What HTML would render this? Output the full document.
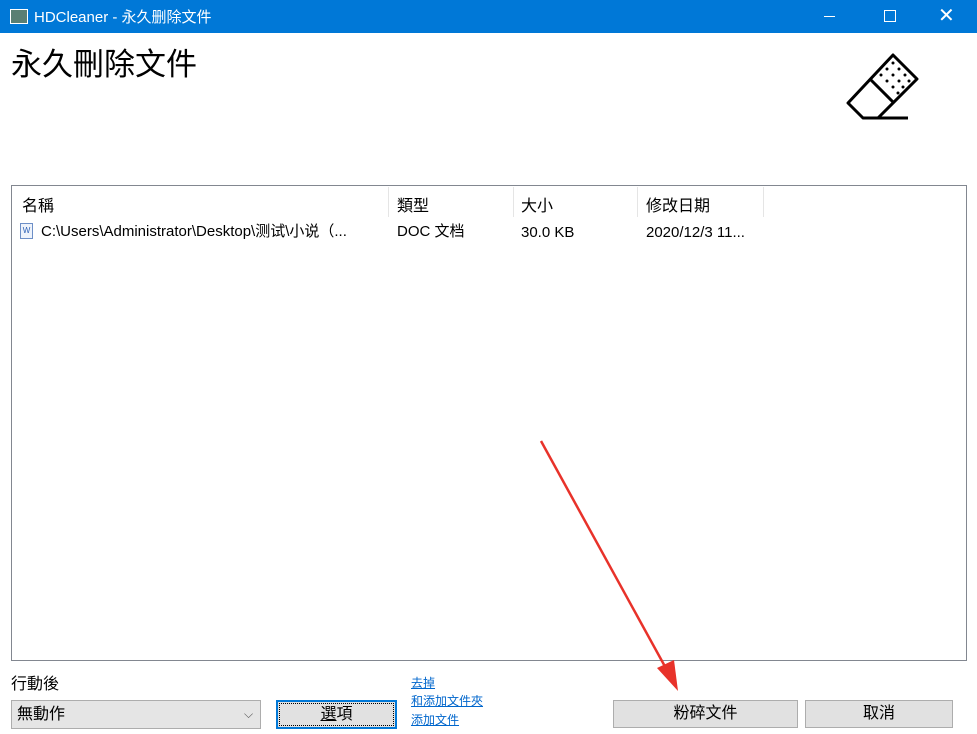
<!DOCTYPE html>
<html><head><meta charset="utf-8"><style>
body{margin:0;width:977px;height:734px;background:#fff;position:relative;overflow:hidden;font-family:"Liberation Sans","Microsoft YaHei","Noto Sans CJK SC",sans-serif;color:#000}
.a{position:absolute}
.tb{left:0;top:0;width:977px;height:33px;background:#0078d7;color:#fff;font-size:15px}
.btn{background:#e1e1e1;border:1px solid #adadad;box-sizing:border-box;text-align:center;font-size:16px;line-height:26px}
.lk{color:#0066cc;text-decoration:underline;font-size:12px}
.hd{top:192px;font-size:16px}
.cl{top:222px;font-size:15px;line-height:20px}
</style></head><body>
<div class="a tb">
 <div class="a" style="left:10px;top:9px;width:16px;height:13px;border:1px solid #fff;background:#5a7f73"></div>
 <div class="a" style="left:34px;top:6px">HDCleaner - 永久删除文件</div>
 <div class="a" style="left:824px;top:16px;width:11px;height:1px;background:#fff"></div>
 <div class="a" style="left:884px;top:10px;width:10px;height:10px;border:1px solid #fff"></div>
 <div class="a" style="left:938px;top:3px;font-size:20px">✕</div>
</div>
<div class="a" style="left:11px;top:39px;font-size:31px">永久刪除文件</div>
<svg class="a" style="left:840px;top:50px" width="85" height="75" viewBox="0 0 85 75">
 <g fill="none" stroke="#000" stroke-width="3" stroke-linejoin="round">
 <path d="M53 5 L77 29 L38 68 L23 68 L8 53 Z"/>
 <path d="M30 29 L54 53"/>
 <path d="M23 68 L68 68"/></g>
 <g fill="#000"><circle cx="53" cy="13" r="1.5"/><circle cx="47" cy="19" r="1.5"/><circle cx="59" cy="19" r="1.5"/><circle cx="41" cy="25" r="1.5"/><circle cx="53" cy="25" r="1.5"/><circle cx="65" cy="25" r="1.5"/><circle cx="47" cy="31" r="1.5"/><circle cx="59" cy="31" r="1.5"/><circle cx="69" cy="31" r="1.5"/><circle cx="53" cy="37" r="1.5"/><circle cx="63" cy="37" r="1.5"/><circle cx="58" cy="43" r="1.5"/></g>
</svg>
<div class="a" style="left:11px;top:185px;width:954px;height:474px;border:1px solid #828790"></div>
<div class="a" style="left:388px;top:187px;width:1px;height:30px;background:#e5e5e5"></div>
<div class="a" style="left:513px;top:187px;width:1px;height:30px;background:#e5e5e5"></div>
<div class="a" style="left:637px;top:187px;width:1px;height:30px;background:#e5e5e5"></div>
<div class="a" style="left:763px;top:187px;width:1px;height:30px;background:#e5e5e5"></div>
<div class="a hd" style="left:22px">名稱</div>
<div class="a hd" style="left:397px">類型</div>
<div class="a hd" style="left:521px">大小</div>
<div class="a hd" style="left:646px">修改日期</div>
<div class="a" style="left:20px;top:223px;width:11px;height:14px;border:1px solid #6d8fc7;background:#eef3fb;font-size:8px;color:#2b5fb5;text-align:center;line-height:14px">W</div>
<div class="a cl" style="left:41px">C:\Users\Administrator\Desktop\测试\小说（...</div>
<div class="a cl" style="left:397px">DOC 文档</div>
<div class="a cl" style="left:521px">30.0 KB<span style="font-family:'Noto Sans CJK SC'"> </span></div>
<div class="a cl" style="left:646px">2020/12/3 11...<span style="font-family:'Noto Sans CJK SC'"> </span></div>
<div class="a" style="left:11px;top:670px;font-size:16px">行動後</div>
<div class="a" style="left:11px;top:700px;width:250px;height:29px;background:#e5e5e5;border:1px solid #adadad;box-sizing:border-box;font-size:16px;line-height:27px;padding-left:5px">無動作<span class="a" style="left:232px;top:0;font-size:12px;color:#555">⌵</span></div>
<div class="a btn" style="left:276px;top:700px;width:121px;height:29px;border:2px solid #0078d7;outline:1px dotted #000;outline-offset:-4px"><u>選</u>項</div>
<div class="a lk" style="left:411px;top:674px">去掉</div>
<div class="a lk" style="left:411px;top:692px">和添加文件夾</div>
<div class="a lk" style="left:411px;top:711px">添加文件</div>
<div class="a btn" style="left:613px;top:700px;width:185px;height:28px">粉碎文件</div>
<div class="a btn" style="left:805px;top:700px;width:148px;height:28px">取消</div>
<svg class="a" style="left:0;top:0" width="977" height="734"><line x1="541" y1="441" x2="668" y2="672" stroke="#e8322a" stroke-width="2.5"/><polygon points="678,691 657,668 674,660" fill="#e8322a"/></svg>
</body></html>
